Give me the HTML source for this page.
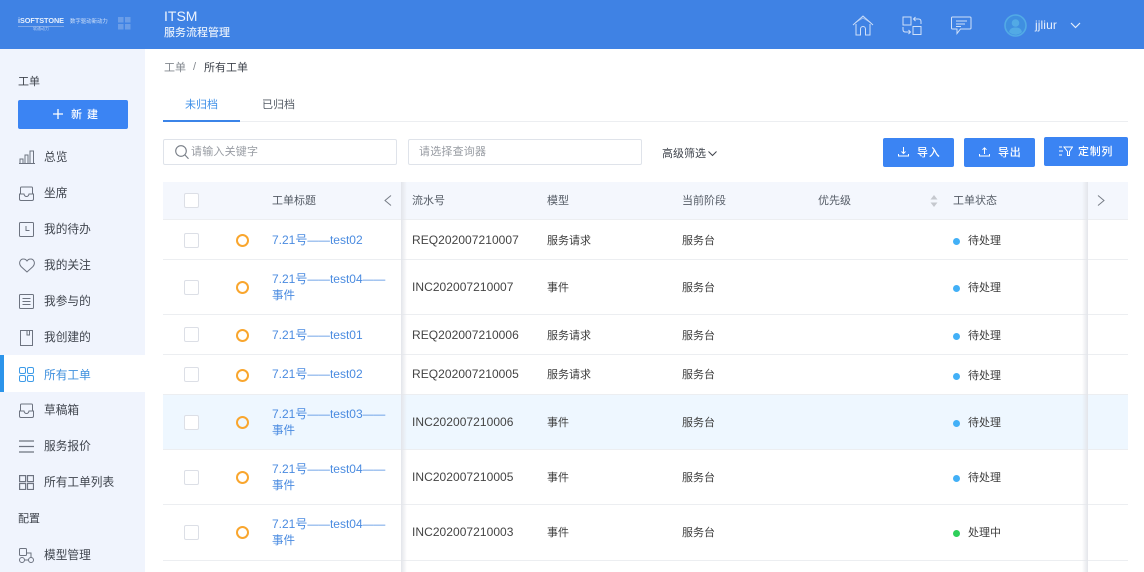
<!DOCTYPE html>
<html lang="zh"><head><meta charset="utf-8"><title>ITSM</title>
<style>
*{box-sizing:border-box;margin:0;padding:0}
html,body{width:1144px;height:572px;overflow:hidden;background:#fff}
body{position:relative;font-family:"Liberation Sans","Noto Sans CJK SC",sans-serif;font-size:12px;color:#444}
.a{position:absolute;white-space:nowrap}
svg{position:absolute;fill:none}
.top{left:0;top:0;width:1144px;height:49px;background:#3f82e4}
.side{left:0;top:49px;width:145px;height:523px;background:#f0f4fd}
.m{left:44px;font-size:11.7px;line-height:18px;color:#3f444d;margin-top:1px}
.row{left:163px;width:965px;border-bottom:1px solid #eceef1}
.cb{width:15px;height:15px;border:1px solid #dcdfe6;border-radius:2px;background:#fff;left:184px}
.ring{left:235.500px;width:13px;height:13px;border:2.700px solid #f9a62e;border-radius:50%}
.link{left:272px;color:#4a8be0;font-size:12px;line-height:16px}
.link i{font-style:normal;font-size:11.300px}
.link.z{font-size:11.500px;margin-top:1px}
.t{font-size:12px;line-height:16px;color:#444;letter-spacing:.05px}
.c{font-size:11px;line-height:16px;color:#3c3c3c;margin-top:1px}
.h{font-size:11px;line-height:16px;color:#555c66;margin-top:1px}
.dot{left:953px;width:7px;height:7px;border-radius:50%;background:#42b0f7}
.btn{background:#3b84f3;border-radius:2px;color:#fff;font-size:11px;font-weight:500;letter-spacing:.7px}
.inp{border:1px solid #dfe3ea;border-radius:2px;height:26px;background:#fff;color:#989ca3;font-size:11px;line-height:25px;letter-spacing:.2px}
</style></head><body>

<div class="a top"></div>
<div class="a" style="left:18px;top:16px;font-size:7.300px;line-height:10px;font-weight:700;color:#e6effc;letter-spacing:-.05px">iSOFTSTONE</div>
<div class="a" style="left:70px;top:18px;font-size:5.400px;line-height:8px;color:#cfe0f8">数字驱动新动力</div>
<div class="a" style="left:18px;top:26px;width:46px;height:1px;background:#7fa8e8"></div>
<div class="a" style="left:33px;top:26px;font-size:4px;line-height:5px;color:#b9d0f4">软通动力</div>
<svg style="left:118px;top:17px" width="13" height="13"><g fill="#6a9de8"><rect width="5.500" height="5.500"/><rect x="7" width="5.500" height="5.500"/><rect y="7" width="5.500" height="5.500"/><rect x="7" y="7" width="5.500" height="5.500"/></g></svg>
<div class="a" style="left:164px;top:8px;font-size:14px;line-height:17px;color:#eef4fd">ITSM</div>
<div class="a" style="left:164px;top:26px;font-size:11px;line-height:15px;color:#e4eefb;font-weight:500">服务流程管理</div>

<svg style="left:852px;top:15px" width="22" height="21" stroke="#cfe0f9" stroke-width="1"><path d="M1 10 11 1l10 9M4 9v11h4.500v-6a2.500 2.500 0 0 1 5 0v6H18V9"/><path d="M3.500 7.500 11 3l7.500 4.500" opacity=".6"/></svg>
<svg style="left:902px;top:16px" width="20" height="20" stroke="#cfe0f9" stroke-width="1"><rect x="1" y="1" width="8" height="8"/><rect x="11" y="10.500" width="8" height="8"/><path d="M12 3h4.500q2.500 0 2.500 2.500V8M13.500 1 11.500 3l2 2M1 11v2.500Q1 16 3.500 16H8M6.500 14l2 2-2 2"/></svg>
<svg style="left:951px;top:16px" width="21" height="19" stroke="#cfe0f9" stroke-width="1"><path d="M1.500 1h17.500q1 0 1 1v10q0 1-1 1H9.500l-3.500 4.500V13H1.500q-1 0-1-1V2q0-1 1-1z"/><path d="M5 5h11M5 8h9M5 10.500h5"/></svg>
<svg style="left:1004px;top:14px" width="23" height="23"><circle cx="11.500" cy="11.500" r="10.500" fill="#3f8fe0" stroke="#52aae5" stroke-width="1.600"/><circle cx="11.500" cy="9" r="3.800" fill="#52aae5"/><path d="M5 18c1-3.500 3-4.500 6.500-4.500S17 14.500 18 18a9 9 0 0 1-13 0z" fill="#52aae5"/></svg>
<div class="a" style="left:1035px;top:17px;font-size:12px;line-height:16px;color:#e8f0fc;letter-spacing:.1px">jjliur</div>
<svg style="left:1070px;top:22px" width="11" height="7" stroke="#e4eefb" stroke-width="1.200"><path d="M1 1l4.500 4.500L10 1"/></svg>

<div class="a side"></div>
<div class="a" style="left:0;top:355px;width:145px;height:37px;background:#fff"></div>
<div class="a" style="left:0;top:355px;width:4px;height:37px;background:#2c94ea"></div>
<div class="a" style="left:18px;top:74px;font-size:11px;line-height:17px;color:#3f444d">工单</div>
<div class="a btn" style="left:18px;top:100px;width:110px;height:29px;line-height:30px;font-size:11px;padding-left:53px;letter-spacing:5px">新建</div>
<svg style="left:53px;top:109px" width="10" height="10" stroke="#fff" stroke-width="1.300"><path d="M5 0v10M0 5h10"/></svg>

<svg style="left:19px;top:150px" width="16" height="14" stroke="#6d7380" stroke-width="1"><path d="M0 13.500h16M1 13V9h3v4M6 13V5h3v8M11 13V1h3.500v12"/></svg>
<div class="a m" style="top:148px">总览</div>
<svg style="left:19px;top:186px" width="15" height="15" stroke="#6d7380" stroke-width="1"><path d="M1.500 8V2q0-1 1-1h10q1 0 1 1v6M.500 8h4.500q.5 2.500 2.500 2.500T10 8h4.500v5q0 1.500-1.500 1.500H2Q.500 14.500.500 13z"/></svg>
<div class="a m" style="top:184px">坐席</div>
<svg style="left:19px;top:222px" width="15" height="15" stroke="#6d7380" stroke-width="1"><rect x=".5" y=".5" width="14" height="14" rx="1"/><path d="M7 4v4.500h3.500"/></svg>
<div class="a m" style="top:220px">我的待办</div>
<svg style="left:19px;top:258px" width="16" height="15" stroke="#6d7380" stroke-width="1"><path d="M8 14 2 8.500C-1 5 1.500.8 4.500 1 6 1 7.200 1.800 8 3c.8-1.200 2-2 3.500-2 3-.2 5.500 4 2.500 7.500z"/></svg>
<div class="a m" style="top:256px">我的关注</div>
<svg style="left:19px;top:294px" width="15" height="15" stroke="#6d7380" stroke-width="1"><rect x=".5" y=".5" width="14" height="14" rx="1"/><path d="M3.500 4.500h8M3.500 7.500h8M3.500 10.500h8"/></svg>
<div class="a m" style="top:292px">我参与的</div>
<svg style="left:20px;top:330px" width="13" height="16" stroke="#6d7380" stroke-width="1"><path d="M.5.500h12v15H.5zM7 .500v4.500h2.500V.500"/></svg>
<div class="a m" style="top:328px">我创建的</div>
<svg style="left:19px;top:367px" width="15" height="15" stroke="#3d9be8" stroke-width="1"><rect x=".5" y=".5" width="6" height="6" rx="1.500"/><rect x="8.500" y=".5" width="6" height="6" rx="1.500"/><rect x=".5" y="8.500" width="6" height="6" rx="1.500"/><rect x="8.500" y="8.500" width="6" height="6" rx="1.500"/></svg>
<div class="a m" style="top:366px;color:#3d8fdd">所有工单</div>
<svg style="left:19px;top:403px" width="15" height="15" stroke="#6d7380" stroke-width="1"><path d="M1.500 8V2q0-1 1-1h10q1 0 1 1v6M.500 8h4.500q.5 2.500 2.500 2.500T10 8h4.500v5q0 1.500-1.500 1.500H2Q.500 14.500.500 13z"/></svg>
<div class="a m" style="top:401px">草稿箱</div>
<svg style="left:19px;top:440px" width="15" height="13" stroke="#6d7380" stroke-width="1.200"><path d="M0 1h15M0 6.500h15M0 12h15"/></svg>
<div class="a m" style="top:437px">服务报价</div>
<svg style="left:19px;top:475px" width="15" height="15" stroke="#6d7380" stroke-width="1.200"><rect x=".6" y=".6" width="6" height="6"/><rect x="8.500" y=".6" width="6" height="6"/><rect x=".6" y="8.500" width="6" height="6"/><rect x="8.500" y="8.500" width="6" height="6"/></svg>
<div class="a m" style="top:473px">所有工单列表</div>
<div class="a" style="left:18px;top:511px;font-size:11px;line-height:17px;color:#3f444d">配置</div>
<svg style="left:19px;top:548px" width="15" height="15" stroke="#6d7380" stroke-width="1"><rect x=".5" y=".5" width="7" height="7" rx="1"/><circle cx="3" cy="12" r="2.500"/><circle cx="12" cy="12" r="2.500"/><path d="M8 5h4v4.500M5.500 12h4"/></svg>
<div class="a m" style="top:546px">模型管理</div>

<div class="a" style="left:164px;top:60px;font-size:11px;line-height:16px;color:#83888f">工单</div>
<div class="a" style="left:193px;top:59px;font-size:11px;line-height:16px;color:#83888f">/</div>
<div class="a" style="left:204px;top:60px;font-size:11px;line-height:16px;color:#3f444d">所有工单</div>

<div class="a" style="left:185px;top:97px;font-size:11px;line-height:16px;color:#3d8fe8">未归档</div>
<div class="a" style="left:262px;top:97px;font-size:11px;line-height:16px;color:#555c66">已归档</div>
<div class="a" style="left:163px;top:121px;width:965px;height:1px;background:#eceef1"></div>
<div class="a" style="left:163px;top:120px;width:77px;height:2px;background:#3b84e8"></div>

<div class="a inp" style="left:163px;top:139px;width:234px;padding-left:27px">请输入关键字</div>
<svg style="left:175px;top:145px" width="14" height="15" stroke="#777d86" stroke-width="1.100"><circle cx="6" cy="6" r="5.300"/><path d="M10 10l3.500 3.800"/></svg>
<div class="a inp" style="left:408px;top:139px;width:234px;padding-left:10px">请选择查询器</div>
<div class="a" style="left:662px;top:146px;font-size:11px;line-height:16px;color:#3f444d">高级筛选</div>
<svg style="left:708px;top:151px" width="9" height="6" stroke="#3f444d" stroke-width="1"><path d="M.500.500 4.500 4.500l4-4"/></svg>

<div class="a btn" style="left:883px;top:138px;width:71px;height:29px;line-height:30px;padding-left:34px">导入</div>
<div class="a btn" style="left:964px;top:138px;width:71px;height:29px;line-height:30px;padding-left:34px">导出</div>
<div class="a btn" style="left:1044px;top:137px;width:84px;height:29px;line-height:30px;padding-left:34px">定制列</div>
<svg style="left:898px;top:147px" width="11" height="10" stroke="#fff" stroke-width="1"><path d="M5.500 0v6.500M3.500 4.500l2 2 2-2M.500 7v2h10V7"/></svg>
<svg style="left:979px;top:147px" width="11" height="10" stroke="#fff" stroke-width="1"><path d="M5.500 7V.8M3.500 2.800l2-2 2 2M.500 7v2h10V7"/></svg>
<svg style="left:1059px;top:146px" width="14" height="11" stroke="#fff" stroke-width="1"><path d="M0 1h3M0 5h4M0 9h3M5 1h8.500L10.500 5.500V9.500H8.500V5.500z"/></svg>

<div class="a" style="left:163px;top:182px;width:965px;height:38px;background:#f4f7fd;border-bottom:1px solid #eceef1"></div>
<div class="a row" style="top:220px;height:40px"></div>
<div class="a row" style="top:260px;height:55px"></div>
<div class="a row" style="top:315px;height:40px"></div>
<div class="a row" style="top:355px;height:40px"></div>
<div class="a row" style="top:395px;height:55px;background:#eef7ff"></div>
<div class="a row" style="top:450px;height:55px"></div>
<div class="a row" style="top:505px;height:56px"></div>

<div class="a" style="left:401px;top:182px;width:6px;height:390px;background:linear-gradient(90deg,#e3e5ea,rgba(230,232,238,0))"></div>
<div class="a" style="left:1082px;top:182px;width:6px;height:390px;background:linear-gradient(270deg,#e3e5ea,rgba(230,232,238,0))"></div>

<div class="a cb" style="top:193px"></div>
<div class="a h" style="left:272px;top:192px">工单标题</div>
<svg style="left:384px;top:195px" width="8" height="11" stroke="#777d86" stroke-width="1"><path d="M7 .5 1 5.500l6 5"/></svg>
<div class="a h" style="left:412px;top:192px">流水号</div>
<div class="a h" style="left:547px;top:192px">模型</div>
<div class="a h" style="left:682px;top:192px">当前阶段</div>
<div class="a h" style="left:818px;top:192px">优先级</div>
<svg style="left:930px;top:195px" width="8" height="12"><path d="M4 0l3.500 4.500h-7zM4 12 .5 7.500h7z" fill="#c5c8ce"/></svg>
<div class="a h" style="left:953px;top:192px">工单状态</div>
<svg style="left:1097px;top:195px" width="8" height="11" stroke="#777d86" stroke-width="1"><path d="M1 .5l6 5-6 5"/></svg>

<div class="a cb" style="top:233px"></div><div class="a ring" style="top:234px"></div>
<div class="a link" style="top:232px">7.21号<i>——</i>test02</div>
<div class="a t" style="left:412px;top:232px">REQ202007210007</div><div class="a c" style="left:547px;top:232px">服务请求</div><div class="a c" style="left:682px;top:232px">服务台</div>
<div class="a dot" style="top:238px"></div><div class="a c" style="left:968px;top:232px">待处理</div>

<div class="a cb" style="top:280px"></div><div class="a ring" style="top:281px"></div>
<div class="a link" style="top:271px">7.21号<i>——</i>test04<i>——</i></div><div class="a link z" style="top:287px">事件</div>
<div class="a t" style="left:412px;top:279px">INC202007210007</div><div class="a c" style="left:547px;top:279px">事件</div><div class="a c" style="left:682px;top:279px">服务台</div>
<div class="a dot" style="top:285px"></div><div class="a c" style="left:968px;top:279px">待处理</div>

<div class="a cb" style="top:327px"></div><div class="a ring" style="top:329px"></div>
<div class="a link" style="top:327px">7.21号<i>——</i>test01</div>
<div class="a t" style="left:412px;top:327px">REQ202007210006</div><div class="a c" style="left:547px;top:327px">服务请求</div><div class="a c" style="left:682px;top:327px">服务台</div>
<div class="a dot" style="top:333px"></div><div class="a c" style="left:968px;top:327px">待处理</div>

<div class="a cb" style="top:367px"></div><div class="a ring" style="top:369px"></div>
<div class="a link" style="top:366px">7.21号<i>——</i>test02</div>
<div class="a t" style="left:412px;top:366px">REQ202007210005</div><div class="a c" style="left:547px;top:366px">服务请求</div><div class="a c" style="left:682px;top:366px">服务台</div>
<div class="a dot" style="top:373px"></div><div class="a c" style="left:968px;top:367px">待处理</div>

<div class="a cb" style="top:415px"></div><div class="a ring" style="top:416px"></div>
<div class="a link" style="top:406px">7.21号<i>——</i>test03<i>——</i></div><div class="a link z" style="top:422px">事件</div>
<div class="a t" style="left:412px;top:414px">INC202007210006</div><div class="a c" style="left:547px;top:414px">事件</div><div class="a c" style="left:682px;top:414px">服务台</div>
<div class="a dot" style="top:420px"></div><div class="a c" style="left:968px;top:414px">待处理</div>

<div class="a cb" style="top:470px"></div><div class="a ring" style="top:471px"></div>
<div class="a link" style="top:461px">7.21号<i>——</i>test04<i>——</i></div><div class="a link z" style="top:477px">事件</div>
<div class="a t" style="left:412px;top:469px">INC202007210005</div><div class="a c" style="left:547px;top:469px">事件</div><div class="a c" style="left:682px;top:469px">服务台</div>
<div class="a dot" style="top:475px"></div><div class="a c" style="left:968px;top:469px">待处理</div>

<div class="a cb" style="top:525px"></div><div class="a ring" style="top:526px"></div>
<div class="a link" style="top:516px">7.21号<i>——</i>test04<i>——</i></div><div class="a link z" style="top:532px">事件</div>
<div class="a t" style="left:412px;top:524px">INC202007210003</div><div class="a c" style="left:547px;top:524px">事件</div><div class="a c" style="left:682px;top:524px">服务台</div>
<div class="a dot" style="top:530px;background:#2ecf5a"></div><div class="a c" style="left:968px;top:524px">处理中</div>

</body></html>
